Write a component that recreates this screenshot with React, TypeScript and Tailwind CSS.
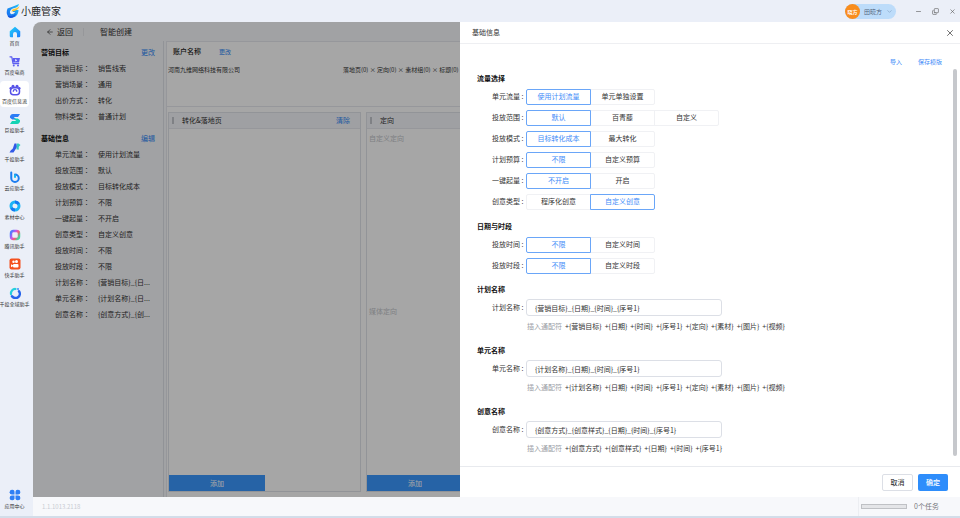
import React, { useState } from "react";
import { ArrowLeft, ChevronDown, Copy, Minus, X } from "lucide-react";

const railItems = [
  { label: "首页", icon: <HomeIcon /> },
  { label: "百度电商", icon: <CartIcon /> },
  { label: "百度信息流", icon: <PawIcon />, active: true },
  { label: "巨投助手", icon: <GiantIcon /> },
  { label: "千投助手", icon: <KiloIcon /> },
  { label: "云应助手", icon: <CloudIcon /> },
  { label: "素材中心", icon: <MaterialIcon /> },
  { label: "腾讯助手", icon: <TencentIcon /> },
  { label: "快手助手", icon: <KuaishouIcon /> },
  { label: "千投全域助手", icon: <GlobalIcon /> },
];

const summary = [
  {
    title: "营销目标",
    action: "更改",
    rows: [
      ["营销目标", "销售线索"],
      ["营销场景", "通用"],
      ["出价方式", "转化"],
      ["物料类型", "普通计划"],
    ],
  },
  {
    title: "基础信息",
    action: "编辑",
    rows: [
      ["单元流量", "使用计划流量"],
      ["投放范围", "默认"],
      ["投放模式", "目标转化成本"],
      ["计划预算", "不限"],
      ["一键起量", "不开启"],
      ["创意类型", "自定义创意"],
      ["投放时间", "不限"],
      ["投放时段", "不限"],
      ["计划名称", "{营销目标}_{日..."],
      ["单元名称", "{计划名称}_{日..."],
      ["创意名称", "{创意方式}_{创..."],
    ],
  },
];

const choiceSections = [
  {
    title: "流量选择",
    rows: [
      { label: "单元流量", options: ["使用计划流量", "单元单独设置"], selected: 0 },
      { label: "投放范围", options: ["默认", "百青藤", "自定义"], selected: 0 },
      { label: "投放模式", options: ["目标转化成本", "最大转化"], selected: 0 },
      { label: "计划预算", options: ["不限", "自定义预算"], selected: 0 },
      { label: "一键起量", options: ["不开启", "开启"], selected: 0 },
      { label: "创意类型", options: ["程序化创意", "自定义创意"], selected: 1 },
    ],
  },
  {
    title: "日期与时段",
    rows: [
      { label: "投放时间", options: ["不限", "自定义时间"], selected: 0 },
      { label: "投放时段", options: ["不限", "自定义时段"], selected: 0 },
    ],
  },
];

const nameSections = [
  {
    label: "计划名称",
    value: "{营销目标}_{日期}_{时间}_{序号1}",
    tokens: ["营销目标", "日期", "时间", "序号1", "定向", "素材", "图片", "视频"],
  },
  {
    label: "单元名称",
    value: "{计划名称}_{日期}_{时间}_{序号1}",
    tokens: ["计划名称", "日期", "时间", "序号1", "定向", "素材", "图片", "视频"],
  },
  {
    label: "创意名称",
    value: "{创意方式}_{创意样式}_{日期}_{时间}_{序号1}",
    tokens: ["创意方式", "创意样式", "日期", "时间", "序号1"],
  },
];

function HomeIcon() {
  return (
    <svg viewBox="0 0 24 24" className="size-3">
      <defs>
        <linearGradient id="home" x1="0" y1="0" x2="1" y2="1">
          <stop offset="0" stopColor="#22d3f5" />
          <stop offset="1" stopColor="#1b7bff" />
        </linearGradient>
      </defs>
      <path d="M12 1.5 1.5 10.5V20a2.5 2.5 0 0 0 2.5 2.5h4V16a4 4 0 0 1 8 0v6.500h4a2.500 2.500 0 0 0 2.500-2.500v-9.500z" fill="url(#home)" />
    </svg>
  );
}

function CartIcon() {
  return (
    <svg viewBox="0 0 24 24" className="size-3" fill="none">
      <path d="M2 3.500h3.500L8 17h11.500" stroke="#5b5df0" strokeWidth="2.500" strokeLinecap="round" strokeLinejoin="round" />
      <path d="M7 6h15l-2 9H8.500z" fill="#5b5df0" />
      <path d="m12.500 8 4 2.500-4 2.500z" fill="#fff" />
      <circle cx="9.500" cy="21" r="2" fill="#5b5df0" />
      <circle cx="18" cy="21" r="2" fill="#5b5df0" />
    </svg>
  );
}

function PawIcon() {
  return (
    <svg viewBox="0 0 24 24" className="size-3" fill="none">
      <rect x="3" y="7.500" width="18" height="14" rx="6" stroke="#5652e8" strokeWidth="3" />
      <circle cx="8" cy="4.500" r="3" fill="#5652e8" />
      <circle cx="16" cy="4.500" r="3" fill="#5652e8" />
      <circle cx="3.500" cy="8.500" r="2.500" fill="#5652e8" />
      <circle cx="20.500" cy="8.500" r="2.500" fill="#5652e8" />
      <path d="M8.500 14.500a3.500 3.500 0 0 1 7 0" stroke="#5652e8" strokeWidth="2.500" strokeLinecap="round" />
    </svg>
  );
}

function GiantIcon() {
  return (
    <svg viewBox="0 0 24 24" className="size-3">
      <path d="M8 2h14l-4 6H9.500L15 13H6.500L2 9.500C1 6 4 2 8 2z" fill="#2b7cf5" />
      <path d="M16 22H2l4-6h8.500L9 11h8.500l4.500 3.500C23 18 20 22 16 22z" fill="#14d3b4" />
    </svg>
  );
}

function KiloIcon() {
  return (
    <svg viewBox="0 0 24 24" className="size-3">
      <path d="M11 3h4l1 7-7 11H1l3-5c3-1 4-3 5-7z" fill="#3159e8" />
      <path d="M16 3h3l4 3-3 3c-1 2-1 4 0 6h-5V9z" fill="#36c9c4" />
    </svg>
  );
}

function CloudIcon() {
  return (
    <svg viewBox="0 0 24 24" className="size-3" fill="none">
      <path d="M4.500 3v11.500a7.500 7.500 0 1 0 7.500-7.500" stroke="#1c7cf0" strokeWidth="4" strokeLinecap="round" />
      <path d="M12 8.500V12" stroke="#16b8ee" strokeWidth="4" strokeLinecap="round" />
    </svg>
  );
}

function MaterialIcon() {
  return (
    <svg viewBox="0 0 24 24" className="size-3" fill="none">
      <circle cx="12" cy="12" r="8" stroke="#1cb4f6" strokeWidth="6" />
      <path d="M12 4a8 8 0 0 1 7 4" stroke="#1678f2" strokeWidth="6" />
      <path d="M12 20a8 8 0 0 1-7-4" stroke="#1678f2" strokeWidth="6" />
    </svg>
  );
}

function TencentIcon() {
  return (
    <svg viewBox="0 0 24 24" className="size-3" fill="none">
      <defs>
        <linearGradient id="tencent" x1="0" y1="0.200" x2="1" y2="0.800">
          <stop offset="0" stopColor="#4f7cff" />
          <stop offset=".35" stopColor="#c455ee" />
          <stop offset=".65" stopColor="#fa5a76" />
          <stop offset="1" stopColor="#42d8a0" />
        </linearGradient>
      </defs>
      <rect x="4" y="4" width="16" height="16" rx="5" stroke="url(#tencent)" strokeWidth="5" />
    </svg>
  );
}

function KuaishouIcon() {
  return (
    <svg viewBox="0 0 24 24" className="size-3">
      <rect x="1" y="1" width="22" height="22" rx="4" fill="#f4511e" />
      <circle cx="9" cy="7.500" r="2.500" fill="#fff" />
      <circle cx="15" cy="7" r="3" fill="#fff" />
      <rect x="8" y="12" width="11" height="7" rx="2" fill="#fff" />
      <path d="m4 12.500 4 2v2l-4 2z" fill="#fff" />
    </svg>
  );
}

function GlobalIcon() {
  return (
    <svg viewBox="0 0 24 24" className="size-3" fill="none">
      <path d="M13 4A8.500 8.500 0 0 0 4 14" stroke="#25d0dd" strokeWidth="4.500" strokeLinecap="round" />
      <path d="M20 8.500A8.500 8.500 0 0 1 6 18.500" stroke="#2563eb" strokeWidth="5" strokeLinecap="round" />
      <circle cx="18" cy="4" r="2" fill="#3f8cff" />
    </svg>
  );
}

function AppsIcon() {
  return (
    <svg viewBox="0 0 24 24" className="size-3" fill="#2f80f5">
      <path d="M6 1.500h1A4 4 0 0 1 11 5.500V11H6a4.700 4.700 0 0 1 0-9.500z" />
      <path d="M18 1.500h-1a4 4 0 0 0-4 4V11h5a4.700 4.700 0 0 0 0-9.500z" />
      <path d="M6 22.500h1a4 4 0 0 0 4-4V13H6a4.700 4.700 0 0 0 0 9.500z" />
      <path d="M18 22.500h-1a4 4 0 0 1-4-4V13h5a4.700 4.700 0 0 1 0 9.500z" />
    </svg>
  );
}

function Logo() {
  return (
    <svg viewBox="0 0 28 30" className="h-4 w-3.5">
      <defs>
        <linearGradient id="logo" x1="0" y1="1" x2="1" y2="0">
          <stop offset="0" stopColor="#1667f0" />
          <stop offset="1" stopColor="#21c4f6" />
        </linearGradient>
      </defs>
      <path d="M3 10C8 8 16 6 26 1c-1 5-4 7-9 8-5 1-8 3-9 7-.6 4 2 6 5 5 3-.6 4-2 5-4h-5l2-4h10c0 8-5 15-13 15C3 28-1 20 3 10z" fill="url(#logo)" />
      <path d="M27 5c-3 4-9 5-14 7l-2 4c8-1 14-3 16-11z" fill="#ffc629" />
      <path d="M3 24c5 2 12 1 17-4-2 6-6 9-11 9-3 0-5-2-6-5z" fill="#1458dd" />
    </svg>
  );
}

function RailButton({ label, icon, active }: { label: string; icon: React.ReactNode; active?: boolean }) {
  return (
    <button
      type="button"
      className={
        "flex h-[26px] w-[29px] flex-col items-center justify-center text-[5px] leading-[9px] whitespace-nowrap text-[#333] " +
        (active ? "rounded-sm bg-white" : "")
      }
    >
      {icon}
      {label}
    </button>
  );
}

function MaterialColumn({ title, clearable, notes }: { title: string; clearable?: boolean; notes?: string[] }) {
  return (
    <section className="flex w-[193px] shrink-0 flex-col border border-[#e1e4ea]">
      <header className="flex h-4 items-center border-b border-[#e6e8ee] bg-[#f5f6fa] pr-[10px] pl-[3px]">
        <span className="h-[7px] w-[2px] bg-[#c4c6cc]" />
        <h3 className="ml-2 flex-1">{title}</h3>
        {clearable && <button type="button" className="text-[#2f88f5]">清除</button>}
      </header>
      <div className="flex flex-1 flex-col px-[2px]">
        {notes?.map((note) => (
          <p key={note} className="flex-1 pt-1 text-[#c3c5ca]">{note}</p>
        ))}
      </div>
      <button type="button" className="h-4 w-24 bg-[#3b99ff] text-white">添加</button>
    </section>
  );
}

function ChoiceRow({ label, options, selected }: { label: string; options: string[]; selected: number }) {
  const [value, setValue] = useState(selected);
  return (
    <div role="radiogroup" aria-label={label} className="flex h-[21px] items-center pl-[15px]">
      <span className="w-[34px] shrink-0">{label} :</span>
      {options.map((option, i) => (
        <label
          key={option}
          className={
            "relative -mr-px flex h-4 w-[65px] items-center justify-center border first-of-type:rounded-l-[2px] last-of-type:rounded-r-[2px] " +
            (value === i ? "z-10 border-[#6aa6f8] text-[#3f8cf8]" : "border-[#f0f1f4]")
          }
        >
          <input type="radio" name={label} checked={value === i} onChange={() => setValue(i)} className="sr-only" />
          {option}
        </label>
      ))}
    </div>
  );
}

function NameSection({ label, value, tokens }: { label: string; value: string; tokens: string[] }) {
  const [name, setName] = useState(value);
  return (
    <section className="mt-[6px] pb-[2px]">
      <h3 className="h-[15px] leading-[15px] font-bold text-[#111]">{label}</h3>
      <div className="flex h-[21px] items-center pl-[15px]">
        <label htmlFor={label} className="w-[34px] shrink-0">{label} :</label>
        <input
          id={label}
          value={name}
          onChange={(e) => setName(e.target.value)}
          className="h-[17px] w-[196px] rounded-[3px] border border-[#dcdfe6] bg-white px-2"
        />
      </div>
      <div className="flex h-[17px] items-center gap-[3px] pl-[50px] whitespace-nowrap">
        <span className="text-[#9a9da5]">插入通配符</span>
        {tokens.map((token) => (
          <button key={token} type="button" onClick={() => setName(name + "_{" + token + "}")}>
            +{"{" + token + "}"}
          </button>
        ))}
      </div>
    </section>
  );
}

export default function App() {
  return (
    <div className="flex h-screen flex-col overflow-hidden border-b-2 border-[#d3dde9] bg-[#ebeff8] font-['Noto_Sans_CJK_SC',sans-serif] text-[7px] leading-[11px] text-[#333]">
      <header className="flex h-[22px] shrink-0 items-center pr-1 pl-[6px]">
        <Logo />
        <h1 className="ml-px text-[10px] leading-4 text-[#222]">小鹿管家</h1>
        <button type="button" className="ml-auto flex h-[15px] w-[51px] items-center rounded-full bg-[#bddcfa] text-[6px] text-[#52647c]">
          <span className="flex size-[15px] items-center justify-center rounded-full bg-[#f98d1d] text-[5px] font-bold text-white">晓方</span>
          <span className="ml-1">田晓方</span>
          <ChevronDown className="ml-1 size-[7px] text-[#7d9cc0]" />
        </button>
        <div className="ml-[19px] flex items-center gap-[10px] text-[#555]">
          <button type="button" aria-label="最小化"><Minus className="size-[7px]" /></button>
          <button type="button" aria-label="还原"><Copy className="size-[7px] -scale-y-100" /></button>
          <button type="button" aria-label="关闭窗口"><X className="size-[7px]" /></button>
        </div>
      </header>

      <div className="flex min-h-0 flex-1">
        <nav className="flex w-[33px] shrink-0 flex-col gap-[3px] pt-px pb-1">
          {railItems.map((item) => (
            <RailButton key={item.label} {...item} />
          ))}
          <div className="mt-auto">
            <RailButton label="应用中心" icon={<AppsIcon />} />
          </div>
        </nav>

        <div className="flex min-w-0 flex-1 flex-col">
          <div className="relative flex min-h-0 flex-1 flex-col overflow-hidden rounded-tl-lg bg-[#f8f9fc]">
            <div className="flex h-[19px] shrink-0 items-center pl-[13px] text-[8px]">
              <button type="button" className="flex items-center gap-[3px]">
                <ArrowLeft className="size-2" />
                返回
              </button>
              <span className="ml-[10px] h-2 w-px bg-[#e6e8ed]" />
              <h2 className="ml-4">智能创建</h2>
            </div>

            <div className="flex min-h-0 flex-1">
              <aside className="w-[131px] shrink-0 border-r border-[#dfe2e8] pt-[3px] pl-2">
                {summary.map((group) => (
                  <section key={group.title} className="mb-[6px]">
                    <div className="flex h-4 items-center justify-between pr-2">
                      <h3 className="font-bold text-[#111]">{group.title}</h3>
                      <button type="button" className="text-[#2f88f5]">{group.action}</button>
                    </div>
                    <dl>
                      {group.rows.map(([term, value]) => (
                        <div key={term} className="flex h-4 items-center pl-[14px]">
                          <dt className="flex w-[43px] shrink-0">
                            {term}
                            <span className="font-['Noto_Sans_CJK_TC',sans-serif]" lang="zh-TW">：</span>
                          </dt>
                          <dd className="whitespace-nowrap">{value}</dd>
                        </div>
                      ))}
                    </dl>
                  </section>
                ))}
              </aside>

              <main className="ml-[2px] flex min-w-0 flex-1 flex-col border-l border-[#e6e8ee] bg-white">
                <section className="h-[66px] shrink-0 border-y border-[#e6e8ee] px-px">
                  <div className="flex h-[19px] items-center gap-[18px] pl-[5px]">
                    <h3 className="font-medium text-[#222]">账户名称</h3>
                    <button type="button" className="text-[6px] text-[#2f88f5]">更改</button>
                  </div>
                  <div className="flex h-[17px] items-center gap-[103px] text-[6px] whitespace-nowrap">
                    <span>河南九维网络科技有限公司</span>
                    <span>落地页(0) × 定向(0) × 素材组(0) × 标题(0) ×</span>
                  </div>
                </section>
                <div className="flex min-h-0 flex-1 gap-[5px] overflow-hidden pt-[5px] pb-[5px] pl-px">
                  <MaterialColumn title="转化&落地页" clearable />
                  <MaterialColumn title="定向" notes={["自定义定向", "媒体定向"]} />
                </div>
              </main>
            </div>

            <div className="absolute inset-0 bg-black/35" />

            <div role="dialog" aria-label="基础信息" className="absolute inset-y-0 right-0 flex w-[500px] max-w-full flex-col bg-white">
              <header className="flex h-[22px] shrink-0 items-center justify-between border-b border-[#eeeff2] pr-[5px] pl-3">
                <h2>基础信息</h2>
                <button type="button" aria-label="关闭">
                  <X className="size-[10px] text-[#555]" strokeWidth={2} />
                </button>
              </header>
              <div className="flex h-[25px] shrink-0 items-end justify-end gap-4 pr-[18px] pb-[2px] text-[6px] text-[#3f8cf8]">
                <button type="button">导入</button>
                <button type="button">保存模版</button>
              </div>
              <div className="flex min-h-0 flex-1 pr-[3px]">
                <form id="basic-info" className="min-w-0 flex-1 overflow-hidden pl-[17px]" onSubmit={(e) => e.preventDefault()}>
                  {choiceSections.map((section, i) => (
                    <section key={section.title} className={i === 0 ? "pt-[2px]" : "mt-[7px]"}>
                      <h3 className="h-[15px] leading-[15px] font-bold text-[#111]">{section.title}</h3>
                      {section.rows.map((row) => (
                        <ChoiceRow key={row.label} {...row} />
                      ))}
                    </section>
                  ))}
                  {nameSections.map((section) => (
                    <NameSection key={section.label} {...section} />
                  ))}
                </form>
                <div className="mb-[10px] w-1 rounded-full bg-[#c6c8cc]" />
              </div>
              <footer className="flex h-[31px] shrink-0 items-center justify-end gap-[5px] border-t border-[#e8eaee] pr-3">
                <button type="button" className="h-[17px] w-[31px] rounded-[2px] border border-[#dcdfe6] text-[#222]">取消</button>
                <button type="submit" form="basic-info" className="h-[17px] w-[30px] rounded-[2px] bg-[#2e8dfb] font-medium text-white">确定</button>
              </footer>
            </div>
          </div>

          <footer className="flex h-[19px] shrink-0 items-center bg-[#f7f8fb] pr-[21px] pl-[9px]">
            <span className="text-[6px] text-[#c9ccd3]">1.1.1013.2118</span>
            <div className="ml-auto flex h-full items-center gap-[7px] border-l border-[#eceef2] pl-[2px] text-[#77797f]">
              <div className="h-[5px] w-[46px] border border-[#bfc1c5] bg-[#e4e5e8]" />
              0个任务
            </div>
          </footer>
        </div>
      </div>
    </div>
  );
}
